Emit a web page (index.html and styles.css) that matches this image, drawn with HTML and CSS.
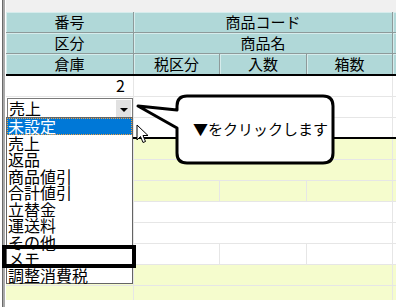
FILE: index.html
```html
<!DOCTYPE html>
<html lang="ja">
<head>
    <meta charset="UTF-8">
    <title>伝票明細</title>
    <link rel="stylesheet" href="styles.css">
</head>
<body>
    <div class="frame">
        <div class="sheet">
            <div class="topband"></div>
            <div class="grid">
                <div class="group head">
                    <div class="row"><div class="cell c1">番号</div><div class="cell wide">商品コード</div><div class="cell edge"></div></div>
                    <div class="row"><div class="cell c1">区分</div><div class="cell wide">商品名</div><div class="cell edge"></div></div>
                    <div class="row last"><div class="cell c1">倉庫</div><div class="cell c2">税区分</div><div class="cell c3">入数</div><div class="cell c4">箱数</div><div class="cell edge"></div></div>
                </div>

                <div class="group current">
                    <div class="row"><div class="cell c1 num">2</div><div class="cell wide"></div><div class="cell edge"></div></div>
                    <div class="row"><div class="cell c1 combo-cell">
                        <div class="combo"><span class="combo-text">売上</span><span class="combo-btn"></span></div>
                    </div><div class="cell wide"></div><div class="cell edge"></div></div>
                    <div class="row last"><div class="cell c1"></div><div class="cell c2"></div><div class="cell c3"></div><div class="cell c4"></div><div class="cell edge"></div></div>
                </div>

                <div class="group alt">
                    <div class="row"><div class="cell c1"></div><div class="cell wide"></div><div class="cell edge"></div></div>
                    <div class="row"><div class="cell c1"></div><div class="cell wide"></div><div class="cell edge"></div></div>
                    <div class="row"><div class="cell c1"></div><div class="cell c2"></div><div class="cell c3"></div><div class="cell c4"></div><div class="cell edge"></div></div>
                </div>

                <div class="group">
                    <div class="row"><div class="cell c1"></div><div class="cell wide"></div><div class="cell edge"></div></div>
                    <div class="row"><div class="cell c1"></div><div class="cell wide"></div><div class="cell edge"></div></div>
                    <div class="row"><div class="cell c1"></div><div class="cell c2"></div><div class="cell c3"></div><div class="cell c4"></div><div class="cell edge"></div></div>
                </div>

                <div class="group alt">
                    <div class="row"><div class="cell c1"></div><div class="cell wide"></div><div class="cell edge"></div></div>
                    <div class="row"><div class="cell c1"></div><div class="cell wide"></div><div class="cell edge"></div></div>
                </div>
            </div>
        </div>
    </div>

    <!-- open dropdown of the 区分 combo -->
    <ul class="dropdown">
        <li class="selected">未設定</li>
        <li>売上</li>
        <li>返品</li>
        <li>商品値引</li>
        <li>合計値引</li>
        <li>立替金</li>
        <li>運送料</li>
        <li>その他</li>
        <li>メモ</li>
        <li>調整消費税</li>
    </ul>
    <div class="mark"></div>

    <svg class="cursor" width="13" height="20" viewBox="0 0 13 20">
        <path d="M1 1 L1 16 L4.5 12.5 L7 18.5 L9.5 17.5 L7 11.5 L12 11.5 Z" fill="#fff" stroke="#000" stroke-width="1"/>
    </svg>

    <div class="callout">
        <svg class="callout-shape" width="210" height="80" viewBox="130 90 210 80">
            <path d="M188 96 H323 Q333 96 333 106 V153 Q333 163 323 163 H187 Q177 163 177 153 V128 L138 106 L177 110 V106 Q177 96 187 96 Z"
                  fill="#fff" stroke="#000" stroke-width="3" stroke-linejoin="round"/>
        </svg>
        <span class="callout-text">▼をクリックします</span>
    </div>
</body>
</html>
```

FILE: styles.css
```css
body {
    margin: 0;
    width: 401px;
    height: 307px;
    overflow: hidden;
    background: #fff;
    font-family: "Noto Sans CJK JP", "Liberation Sans", sans-serif;
    font-size: 15px;
    color: #000;
}

.frame {
    margin-left: 2px;
    height: 307px;
    border-left: 1px solid #6a6a6a;
}

.sheet {
    height: 307px;
    border-left: 2px solid #a9a9a9;
    padding-left: 1px;
}

.topband {
    width: 390px;
    height: 12px;
    background: #f0f0f0;
}

.grid {
    width: 390px;
    height: 288px;
    overflow: hidden;
}

.row {
    display: flex;
    height: 21px;
    box-sizing: border-box;
    border-bottom: 1px solid #e6e6e6;
}

.cell {
    box-sizing: border-box;
    height: 100%;
    border-right: 1px solid #e6e6e6;
    line-height: 19px;
    text-align: center;
    white-space: nowrap;
}

.c1 { width: 128px; }
.wide { width: 259px; }
.c2 { width: 86px; }
.c3 { width: 87px; }
.c4 { width: 86px; }
.edge { width: 3px; border-right: none; }

/* header block */
.head .row {
    border-bottom: 1px solid #8e9a9a;
}
.head .row.last {
    height: 20px;
    border-bottom: none;
}
.head .cell {
    background: #b0d8d8;
    border-right: 1px solid #8e9a9a;
    box-shadow: inset 1px 1px 0 #d6ecec;
}
.head .edge {
    border-right: none;
}

/* current record */
.current {
    border-top: 2px solid #000;
    border-bottom: 2px solid #000;
}
.current .row.last {
    height: 19px;
    border-bottom: none;
}

.alt .row {
    background: #f5fccd;
}

.num {
    text-align: right;
    padding-right: 8px;
    font-size: 16px;
}

.combo-cell {
    padding: 1px 0 0 1px;
}

.combo {
    display: flex;
    height: 20px;
    box-sizing: border-box;
    border: 1px solid #7a7a7a;
    background: #fff;
}

.combo-text {
    flex: 1;
    text-align: left;
    padding-left: 1px;
    font-size: 16px;
    line-height: 18px;
}

.combo-btn {
    width: 15px;
    margin: 1px 1px 0 0;
    background: #e1e1e1;
    position: relative;
}
.combo-btn::after {
    content: "";
    position: absolute;
    left: 4px;
    top: 8px;
    border-left: 4px solid transparent;
    border-right: 4px solid transparent;
    border-top: 4px solid #000;
}

.dropdown {
    position: absolute;
    left: 6px;
    top: 117px;
    width: 127px;
    margin: 0;
    padding: 0;
    list-style: none;
    box-sizing: border-box;
    border: 1px solid #646464;
    background: #fff;
    font-size: 16px;
}

.dropdown li {
    height: 16.5px;
    line-height: 16.5px;
    padding-left: 1px;
    white-space: nowrap;
}

.dropdown .selected {
    background: #0078d7;
    color: #fff;
    outline: 1px dotted #f0a040;
    outline-offset: -1px;
}

.mark {
    position: absolute;
    left: 2px;
    top: 245px;
    width: 134px;
    height: 23px;
    box-sizing: border-box;
    border: 4px solid #000;
}

.cursor {
    position: absolute;
    left: 136px;
    top: 124px;
}

.callout {
    position: absolute;
    left: 130px;
    top: 90px;
    width: 210px;
    height: 80px;
}

.callout-shape {
    display: block;
}

.callout-text {
    position: absolute;
    left: 63px;
    top: 28px;
    font-size: 15px;
    line-height: 22px;
    white-space: nowrap;
}
```
